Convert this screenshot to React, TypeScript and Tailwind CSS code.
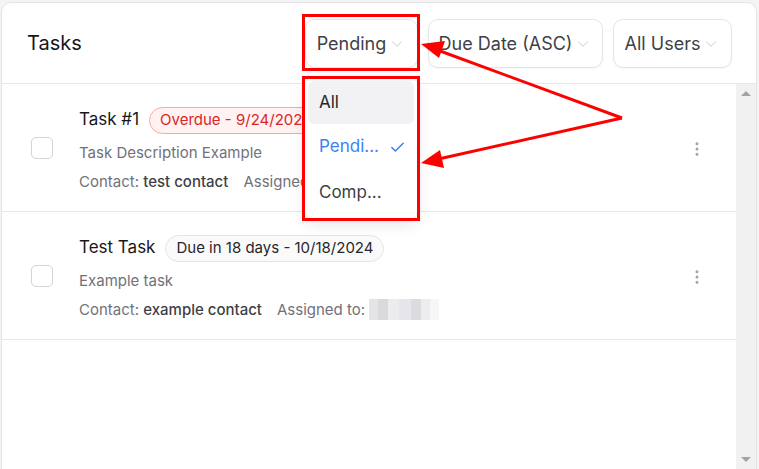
import { Check, ChevronDown, EllipsisVertical } from 'lucide-react';

interface Task {
  id: string;
  title: string;
  badge: string;
  overdue: boolean;
  description: string;
  contact: string;
  assigned: boolean;
}

const tasks: Task[] = [
  {
    id: '1',
    title: 'Task #1',
    badge: 'Overdue - 9/24/2024',
    overdue: true,
    description: 'Task Description Example',
    contact: 'test contact',
    assigned: true,
  },
  {
    id: '2',
    title: 'Test Task',
    badge: 'Due in 18 days - 10/18/2024',
    overdue: false,
    description: 'Example task',
    contact: 'example contact',
    assigned: true,
  },
];

function FilterButton({ label, width }: { label: string; width: string }) {
  return (
    <button
      className={`${width} h-[49px] flex items-center justify-center gap-[2px] rounded-[10px] border border-[#e4e4e7] bg-white text-[18px] text-[#3f3f46] shadow-[0_1px_2px_rgba(0,0,0,0.04)]`}
    >
      <span>{label}</span>
      <ChevronDown size={18} strokeWidth={1.2} className="text-[#c4c4cc] mt-[1px]" />
    </button>
  );
}

function BlurredName() {
  return (
    <span className="inline-flex h-[21px] w-[70px] align-middle">
      <span className="w-[9px] bg-[#e4e4e7]" />
      <span className="w-[10px] bg-[#d9d9de]" />
      <span className="w-[11px] bg-[#ececef]" />
      <span className="w-[12px] bg-[#e6e6ea]" />
      <span className="w-[10px] bg-[#dcdce0]" />
      <span className="w-[9px] bg-[#ededf0]" />
      <span className="w-[9px] bg-[#f6f6f8]" />
    </span>
  );
}

function TaskRow({ task }: { task: Task }) {
  return (
    <div className="h-[128px] flex items-center border-b border-[#e8e8ec] pr-[30px]">
      <div className="w-[77px] flex-none pl-[29px]">
        <div className="w-[22px] h-[22px] rounded-[5px] border border-[#d4d4d8] bg-white" />
      </div>
      <div className="flex-1 flex flex-col mt-[4px]">
        <div className="flex items-center gap-[10px] h-[28px]">
          <span className="text-[17px] text-[#18181b]">{task.title}</span>
          <span
            className={
              task.overdue
                ? 'rounded-full border border-[#fca5a5] bg-[#fef2f2] px-[10px] h-[27px] flex items-center text-[15px] text-[#dc2626]'
                : 'rounded-full border border-[#e4e4e7] bg-[#fafafa] px-[10px] h-[27px] flex items-center text-[15px] text-[#27272a]'
            }
          >
            {task.badge}
          </span>
        </div>
        <div className="mt-[8px] text-[15px] text-[#71717a]">{task.description}</div>
        <div className="mt-[6px] text-[15px] text-[#71717a] flex items-center">
          <span>Contact:&nbsp;</span>
          <span className="font-medium text-[#3f3f46]">{task.contact}</span>
          <span className="ml-[15px]">Assigned to:&nbsp;</span>
          {task.assigned && <BlurredName />}
        </div>
      </div>
      <EllipsisVertical size={18} className="text-[#9ca3af] mt-[2px]" />
    </div>
  );
}

export default function App() {
  return (
    <div className="relative w-[759px] h-[469px] overflow-hidden bg-[#f4f4f5] pt-[2px] pl-[1px] font-['Inter',sans-serif]">
      <div className="w-[756px] h-[500px] rounded-[10px] border border-[#e4e4e7] bg-white overflow-hidden flex flex-col">
        {/* Header */}
        <div className="h-[81px] flex-none flex items-center justify-between pl-[25px] pr-[24px] border-b border-[#e8e8ec]">
          <h2 className="text-[20px] text-[#18181b]">Tasks</h2>
          <div className="flex items-center gap-[10px]">
            <FilterButton label="Pending" width="w-[113px]" />
            <FilterButton label="Due Date (ASC)" width="w-[175px]" />
            <FilterButton label="All Users" width="w-[119px]" />
          </div>
        </div>

        {/* Body */}
        <div className="flex flex-1">
          <div className="flex-1">
            {tasks.map((task) => (
              <TaskRow key={task.id} task={task} />
            ))}
          </div>
          <div className="w-[20px] h-[385px] bg-[#f1f1f1] flex flex-col items-center justify-between py-[7px]">
            <div className="w-0 h-0 border-l-[5px] border-r-[5px] border-b-[5px] border-l-transparent border-r-transparent border-b-[#a3a3a3]" />
            <div className="w-0 h-0 border-l-[5px] border-r-[5px] border-t-[5px] border-l-transparent border-r-transparent border-t-[#a3a3a3]" />
          </div>
        </div>
      </div>

      {/* Open status menu */}
      <div className="absolute left-[305px] top-[78px] w-[112px] h-[141px] rounded-[8px] bg-white shadow-[0_4px_16px_rgba(0,0,0,0.12)] p-[3px] flex flex-col text-[17px]">
        <div className="h-[43px] rounded-[6px] bg-[#f2f2f4] flex items-center px-[11px] text-[#27272a]">All</div>
        <div className="h-[46px] flex items-center justify-between pl-[11px] pr-[8px] text-[#3b82f6]">
          <span>Pendi...</span>
          <Check size={17} strokeWidth={2.2} />
        </div>
        <div className="h-[46px] flex items-center px-[11px] text-[#3f3f46]">Comp...</div>
      </div>

      {/* Annotation boxes */}
      <div className="absolute left-[302px] top-[14px] w-[118px] h-[57px] border-[3px] border-[#ff0000]" />
      <div className="absolute left-[302px] top-[76px] w-[118px] h-[145px] border-[3px] border-[#ff0000]" />

      {/* Annotation arrows */}
      <svg className="absolute left-0 top-0" width="759" height="469">
        <g stroke="#ff0000" strokeWidth="3" fill="none">
          <line x1="622" y1="118" x2="432" y2="48" />
          <line x1="622" y1="118" x2="434" y2="160" />
        </g>
        <polygon points="421,44 445,41 439,58" fill="#ff0000" />
        <polygon points="421,163 440,150 444,168" fill="#ff0000" />
      </svg>
    </div>
  );
}
